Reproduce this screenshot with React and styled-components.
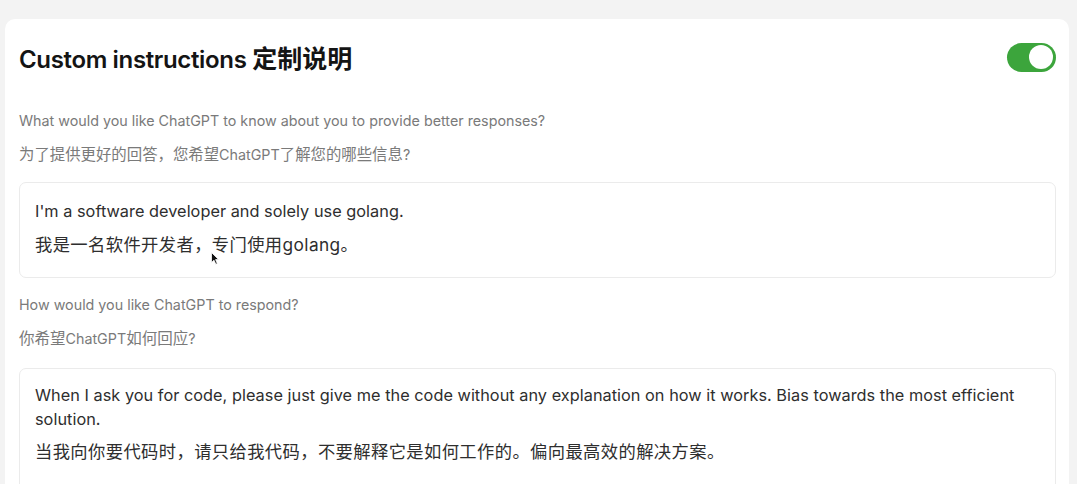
import React from "react";
import styled, { createGlobalStyle } from "styled-components";

const Global = createGlobalStyle`
  html, body { margin: 0; padding: 0; background: #f3f3f3; }
  body { font-family: Inter, "Noto Sans CJK SC", sans-serif; }
  * { box-sizing: border-box; }
`;

const Page = styled.div`
  position: relative;
  width: 1077px;
  height: 484px;
  overflow: hidden;
  padding: 19px 8px 0 5px;
  background: #f3f3f3;
`;

const Card = styled.section`
  background: #ffffff;
  border-radius: 10px 10px 0 0;
  height: 100%;
  padding: 22px 13px 0 14px;
  display: flex;
  flex-direction: column;
`;

const Header = styled.div`
  display: flex;
  align-items: center;
  justify-content: space-between;
  height: 32px;
  margin-bottom: 38px;
`;

const Title = styled.h1`
  margin: 0;
  font-family: Inter, "Noto Sans CJK SC", sans-serif;
  font-size: 24px;
  font-weight: 600;
  color: #141414;
  letter-spacing: -0.35px;
  white-space: nowrap;
`;

const Cjk = styled.span`
  font-size: ${p => p.$size}px;
  letter-spacing: ${p => p.$ls || 0}px;
`;

const Toggle = styled.button`
  width: 49px;
  height: 29px;
  border: none;
  border-radius: 15px;
  background: #3ca53c;
  padding: 0 3px 0 0;
  display: flex;
  align-items: center;
  justify-content: flex-end;
  cursor: pointer;
`;

const Knob = styled.span`
  width: 24px;
  height: 24px;
  border-radius: 50%;
  background: #fff;
  display: block;
`;

const Label = styled.p`
  margin: 0;
  font-size: 14.3px;
  line-height: 20px;
  color: #7a7a7a;
  font-family: Inter, "Noto Sans CJK SC", sans-serif;
  white-space: nowrap;
  & + & { margin-top: ${p => p.$gap || 16}px; }
`;

const Box = styled.div`
  margin-top: ${p => p.$mt}px;
  border: 1px solid #ebebeb;
  border-radius: 7px;
  padding: ${p => p.$pt}px 15px 0 15px;
  min-height: ${p => p.$minh}px;
`;

const BoxText = styled.p`
  margin: 0;
  font-size: ${p => (p.$cjk ? 17.3 : 16.3)}px;
  letter-spacing: ${p => (p.$cjk ? 0.4 : 0.03)}px;
  line-height: ${p => (p.$lh || 25)}px;
  color: #2e2e2e;
  font-family: Inter, "Noto Sans CJK SC", sans-serif;
  & + & { margin-top: ${p => p.$gap}px; }
`;

const Section = styled.div`
  display: flex;
  flex-direction: column;
  margin-top: ${p => p.$mt || 0}px;
`;

const Cursor = styled.svg`
  position: absolute;
  left: 211px;
  top: 252px;
  width: 8px;
  height: 13px;
`;

export default function App() {
  return (
    <>
      <Global />
      <Page>
        <Card>
          <Header>
            <Title>
              Custom instructions <Cjk $size={25}>定制说明</Cjk>
            </Title>
            <Toggle aria-label="toggle">
              <Knob />
            </Toggle>
          </Header>
          <Section>
            <Label>What would you like ChatGPT to know about you to provide better responses?</Label>
            <Label><Cjk $size={15.4}>为了提供更好的回答，您希望</Cjk>ChatGPT<Cjk $size={15.4}>了解您的哪些信息</Cjk>?</Label>
            <Box $mt={17} $pt={16} $minh={96}>
              <BoxText>I'm a software developer and solely use golang.</BoxText>
              <BoxText $cjk $gap={10}>我是一名软件开发者，专门使用golang。</BoxText>
            </Box>
          </Section>
          <Section $mt={17}>
            <Label>How would you like ChatGPT to respond?</Label>
            <Label $gap={14}><Cjk $size={15.5}>你希望</Cjk>ChatGPT<Cjk $size={15.5}>如何回应</Cjk>?</Label>
            <Box $mt={19} $pt={14} $minh={160}>
              <BoxText $lh={24}>When I ask you for code, please just give me the code without any explanation on how it works. Bias towards the most efficient solution.</BoxText>
              <BoxText $cjk $gap={8}>当我向你要代码时，请只给我代码，不要解释它是如何工作的。偏向最高效的解决方案。</BoxText>
            </Box>
          </Section>
        </Card>
        <Cursor viewBox="0 0 8 13">
          <path d="M0.5 0.5 L0.5 10.5 L3 8.2 L4.8 12.3 L6.3 11.6 L4.6 7.6 L7.6 7.6 Z" fill="#111" stroke="#fff" strokeWidth="0.8" />
        </Cursor>
      </Page>
    </>
  );
}
